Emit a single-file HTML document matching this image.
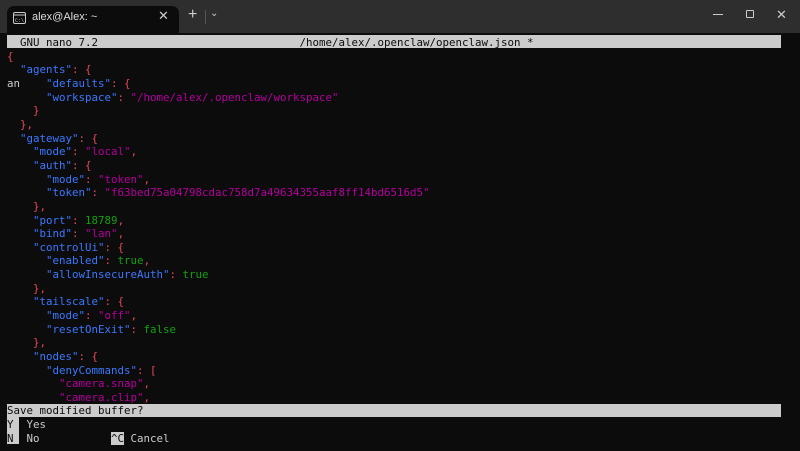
<!DOCTYPE html>
<html><head><meta charset="utf-8"><style>
*{margin:0;padding:0;box-sizing:border-box}
html,body{width:800px;height:451px;overflow:hidden;background:#0c0c0c}
.tb{position:absolute;left:0;top:0;width:800px;height:33px;background:#2e2e2e}
.tab{position:absolute;left:7px;top:6px;width:172px;height:27px;background:#0c0c0c;border-radius:7px 7px 0 0}
.t{font-family:"Liberation Sans",sans-serif;font-size:11px;color:#ddd;position:absolute}
pre{position:absolute;left:7px;top:36.2px;font-family:"DejaVu Sans Mono",monospace;font-size:10.8px;line-height:13.64px;color:#ccc;letter-spacing:0}
.k{color:#3b78ff}.p{color:#e74856}.s{color:#b4009e}.g{color:#13a10e}
.bar{position:absolute;left:7px;width:774px;height:13px;background:#cccccc}
.inv{background:#cccccc;color:#0c0c0c}
</style></head><body>
<div class="tb"></div>
<div class="tab"></div>
<svg style="position:absolute;left:13px;top:12px" width="13" height="12" viewBox="0 0 13 12"><rect x="0.5" y="0.5" width="12" height="11" rx="1.5" fill="none" stroke="#ccc"/><line x1="0.5" y1="3" x2="12.5" y2="3" stroke="#ccc"/><text x="2" y="10" font-size="5" fill="#ccc" font-family="Liberation Mono">C:\</text></svg>
<div class="t" style="left:32px;top:11px">alex@Alex: ~</div>
<div class="t" style="left:158px;top:8px;font-size:13px;color:#ccc">✕</div>
<div class="t" style="left:188px;top:6px;font-size:16px;color:#ccc">+</div>
<div style="position:absolute;left:205px;top:10px;width:1px;height:14px;background:#555"></div>
<div class="t" style="left:210px;top:8px;font-size:10px;color:#ccc">⌄</div>
<div style="position:absolute;left:713px;top:14px;width:10px;height:1px;background:#ccc"></div>
<div style="position:absolute;left:746px;top:10px;width:8px;height:8px;border:1px solid #ccc;border-radius:1px"></div>
<div class="t" style="left:776px;top:7px;font-size:13px;color:#ccc">✕</div>
<div class="bar" style="top:35px"></div>
<div class="bar" style="top:403.5px"></div>
<div style="position:absolute;left:7px;top:417px;width:12px;height:27px;background:#cccccc"></div>
<pre><span style="color:#0c0c0c">  GNU nano 7.2                               /home/alex/.openclaw/openclaw.json *</span>
<span class="p">{</span>
  <span class="k">"agents"</span><span class="p">: {</span>
an    <span class="k">"defaults"</span><span class="p">: {</span>
      <span class="k">"workspace"</span><span class="p">: </span><span class="s">"/home/alex/.openclaw/workspace"</span>
    <span class="p">}</span>
  <span class="p">},</span>
  <span class="k">"gateway"</span><span class="p">: {</span>
    <span class="k">"mode"</span><span class="p">: </span><span class="s">"local"</span><span class="p">,</span>
    <span class="k">"auth"</span><span class="p">: {</span>
      <span class="k">"mode"</span><span class="p">: </span><span class="s">"token"</span><span class="p">,</span>
      <span class="k">"token"</span><span class="p">: </span><span class="s">"f63bed75a04798cdac758d7a49634355aaf8ff14bd6516d5"</span>
    <span class="p">},</span>
    <span class="k">"port"</span><span class="p">: </span><span class="g">18789</span><span class="p">,</span>
    <span class="k">"bind"</span><span class="p">: </span><span class="s">"lan"</span><span class="p">,</span>
    <span class="k">"controlUi"</span><span class="p">: {</span>
      <span class="k">"enabled"</span><span class="p">: </span><span class="g">true</span><span class="p">,</span>
      <span class="k">"allowInsecureAuth"</span><span class="p">: </span><span class="g">true</span>
    <span class="p">},</span>
    <span class="k">"tailscale"</span><span class="p">: {</span>
      <span class="k">"mode"</span><span class="p">: </span><span class="s">"off"</span><span class="p">,</span>
      <span class="k">"resetOnExit"</span><span class="p">: </span><span class="g">false</span>
    <span class="p">},</span>
    <span class="k">"nodes"</span><span class="p">: {</span>
      <span class="k">"denyCommands"</span><span class="p">: [</span>
        <span class="s">"camera.snap"</span><span class="p">,</span>
        <span class="s">"camera.clip"</span><span class="p">,</span>
<span style="color:#0c0c0c">Save modified buffer? </span>
<span style="color:#0c0c0c">Y</span>  Yes
<span style="color:#0c0c0c">N</span>  No           <span class="inv">^C</span> Cancel</pre>
</body></html>
